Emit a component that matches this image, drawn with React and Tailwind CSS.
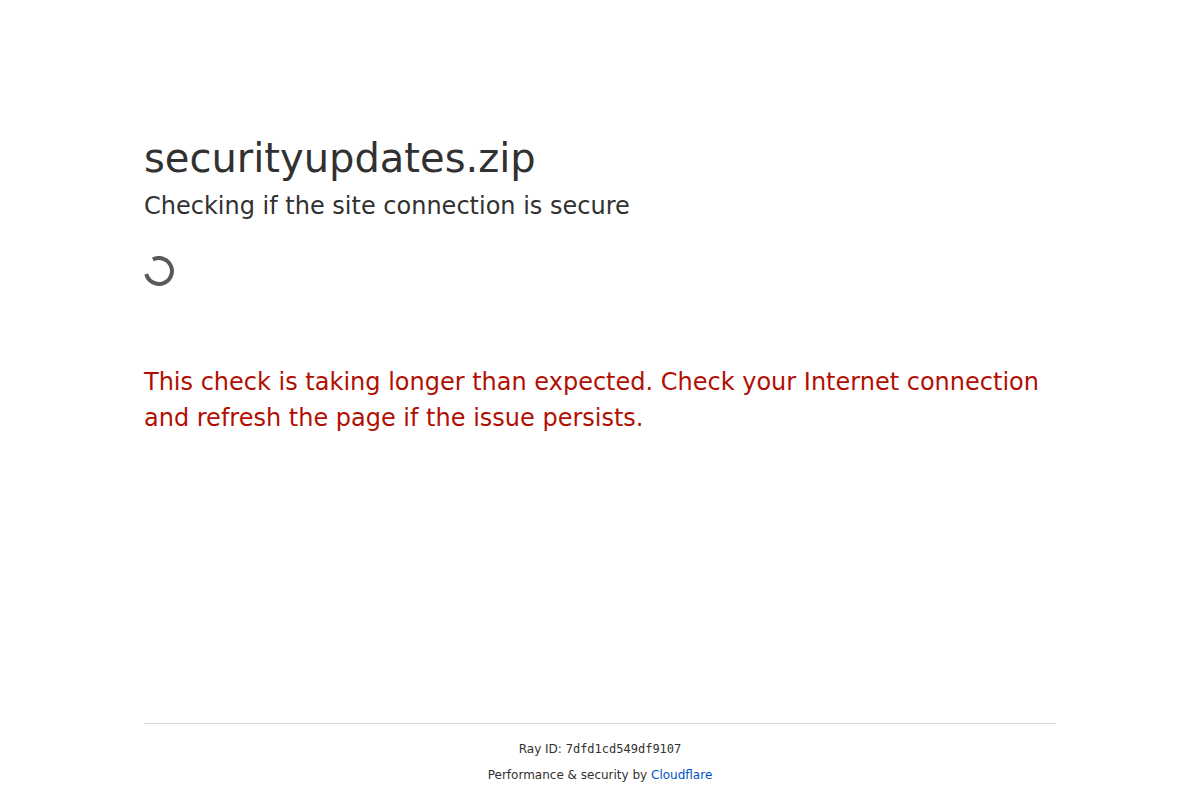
export default function App() {
  return (
    <div className="flex min-h-screen flex-col bg-white font-['DejaVu_Sans',sans-serif] text-[#313131]">
      <main className="mx-auto mt-32 flex w-full max-w-[960px] flex-1 flex-col px-6">
        <h1 className="text-[40px] leading-[60px]">securityupdates.zip</h1>
        <h2 className="text-2xl leading-9">Checking if the site connection is secure</h2>
        <div className="mt-8 h-[30px]" role="status" aria-label="Loading">
          <svg width="30" height="30" viewBox="0 0 30 30" fill="none" stroke="#595959" strokeWidth="4">
            <path d="M8.9 3.5A13 13 0 1 1 2.3 18" />
          </svg>
        </div>
        <p className="mt-[78px] text-2xl leading-9 text-[#b20f03]">
          This check is taking longer than expected. Check your Internet connection and refresh the page if the issue persists.
        </p>
      </main>
      <footer className="mx-auto w-full max-w-[960px] px-6 text-center text-xs leading-[18px]">
        <div className="flex flex-col gap-2 border-t border-[#d9d9d9] py-4">
          <div>
            Ray ID: <code className="font-['DejaVu_Sans_Mono',monospace]">7dfd1cd549df9107</code>
          </div>
          <div>
            Performance &amp; security by{' '}
            <a href="https://www.cloudflare.com" className="text-[#0051c3]">Cloudflare</a>
          </div>
        </div>
      </footer>
    </div>
  );
}
